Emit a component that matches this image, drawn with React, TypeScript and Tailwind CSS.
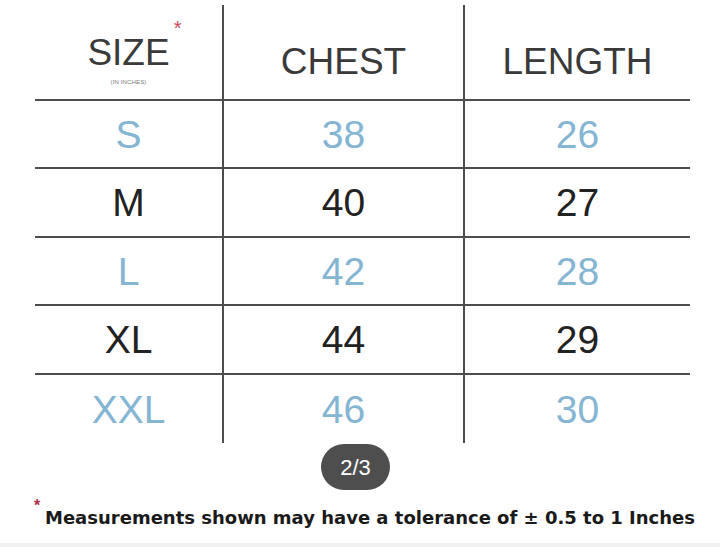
import React from "react";

type Row = { size: string; chest: string; length: string; tint: "blue" | "dark" };

const ROWS: Row[] = [
  { size: "S", chest: "38", length: "26", tint: "blue" },
  { size: "M", chest: "40", length: "27", tint: "dark" },
  { size: "L", chest: "42", length: "28", tint: "blue" },
  { size: "XL", chest: "44", length: "29", tint: "dark" },
  { size: "XXL", chest: "46", length: "30", tint: "blue" },
];

// row heights are a px off each other so the rules land where the photo has them
const ROW_H = ["h-[68px]", "h-[69px]", "h-[68px]", "h-[69px]", "h-[68px]"];

const GRID = "grid w-[655px] grid-cols-[189px_241px_225px]";
const CELL = "flex items-center justify-center";

export default function App() {
  return (
    <div
      className="relative h-[547px] w-[720px] overflow-hidden bg-white"
      style={{ fontFamily: '"Liberation Sans", Arial, sans-serif' }}
    >
      <div className="pl-[35px] pt-[5px]">
        <div className={`${GRID} h-[96px] border-b-2 border-[#4d4d4d] text-[37px] leading-none text-[#3a3a3a]`}>
          <div className={`${CELL} flex-col border-r-2 border-[#4d4d4d] pt-[14px]`}>
            <span className="relative">
              SIZE
              <span className="absolute -right-[12px] -top-[16px] text-[20px] text-[#d0485a]">*</span>
            </span>
            <span className="mt-[8px] text-[6px] tracking-wide text-[#777]">(IN INCHES)</span>
          </div>
          <div className={`${CELL} border-r-2 border-[#4d4d4d] pt-[18px]`}>CHEST</div>
          <div className={`${CELL} pt-[18px]`}>LENGTH</div>
        </div>

        {ROWS.map((r, i) => (
          <div
            key={r.size}
            className={`${GRID} ${ROW_H[i]} text-[39px] leading-none ${
              i < ROWS.length - 1 ? "border-b-2 border-[#4d4d4d]" : ""
            } ${r.tint === "blue" ? "text-[#84b5d3]" : "text-[#222]"}`}
          >
            <div className={`${CELL} border-r-2 border-[#4d4d4d]`}>{r.size}</div>
            <div className={`${CELL} border-r-2 border-[#4d4d4d]`}>{r.chest}</div>
            <div className={CELL}>{r.length}</div>
          </div>
        ))}
      </div>

      <div className="mt-[1px] flex pl-[321px]">
        <div className="flex h-[46px] w-[69px] items-center justify-center rounded-full bg-[#4e4e4e] text-[22px] text-white">
          2/3
        </div>
      </div>

      <div className="relative mt-[16px] pl-[45px]">
        <span className="absolute left-[34px] -top-[12px] text-[16px] font-bold text-[#b03048]">*</span>
        <p
          className="text-[18px] font-bold leading-6 text-[#1a1a1a]"
          style={{ fontFamily: '"DejaVu Sans", sans-serif' }}
        >
          Measurements shown may have a tolerance of ± 0.5 to 1 Inches
        </p>
      </div>

      <div className="absolute bottom-0 left-0 h-[4px] w-full bg-[#f0f0f0]" />
    </div>
  );
}
